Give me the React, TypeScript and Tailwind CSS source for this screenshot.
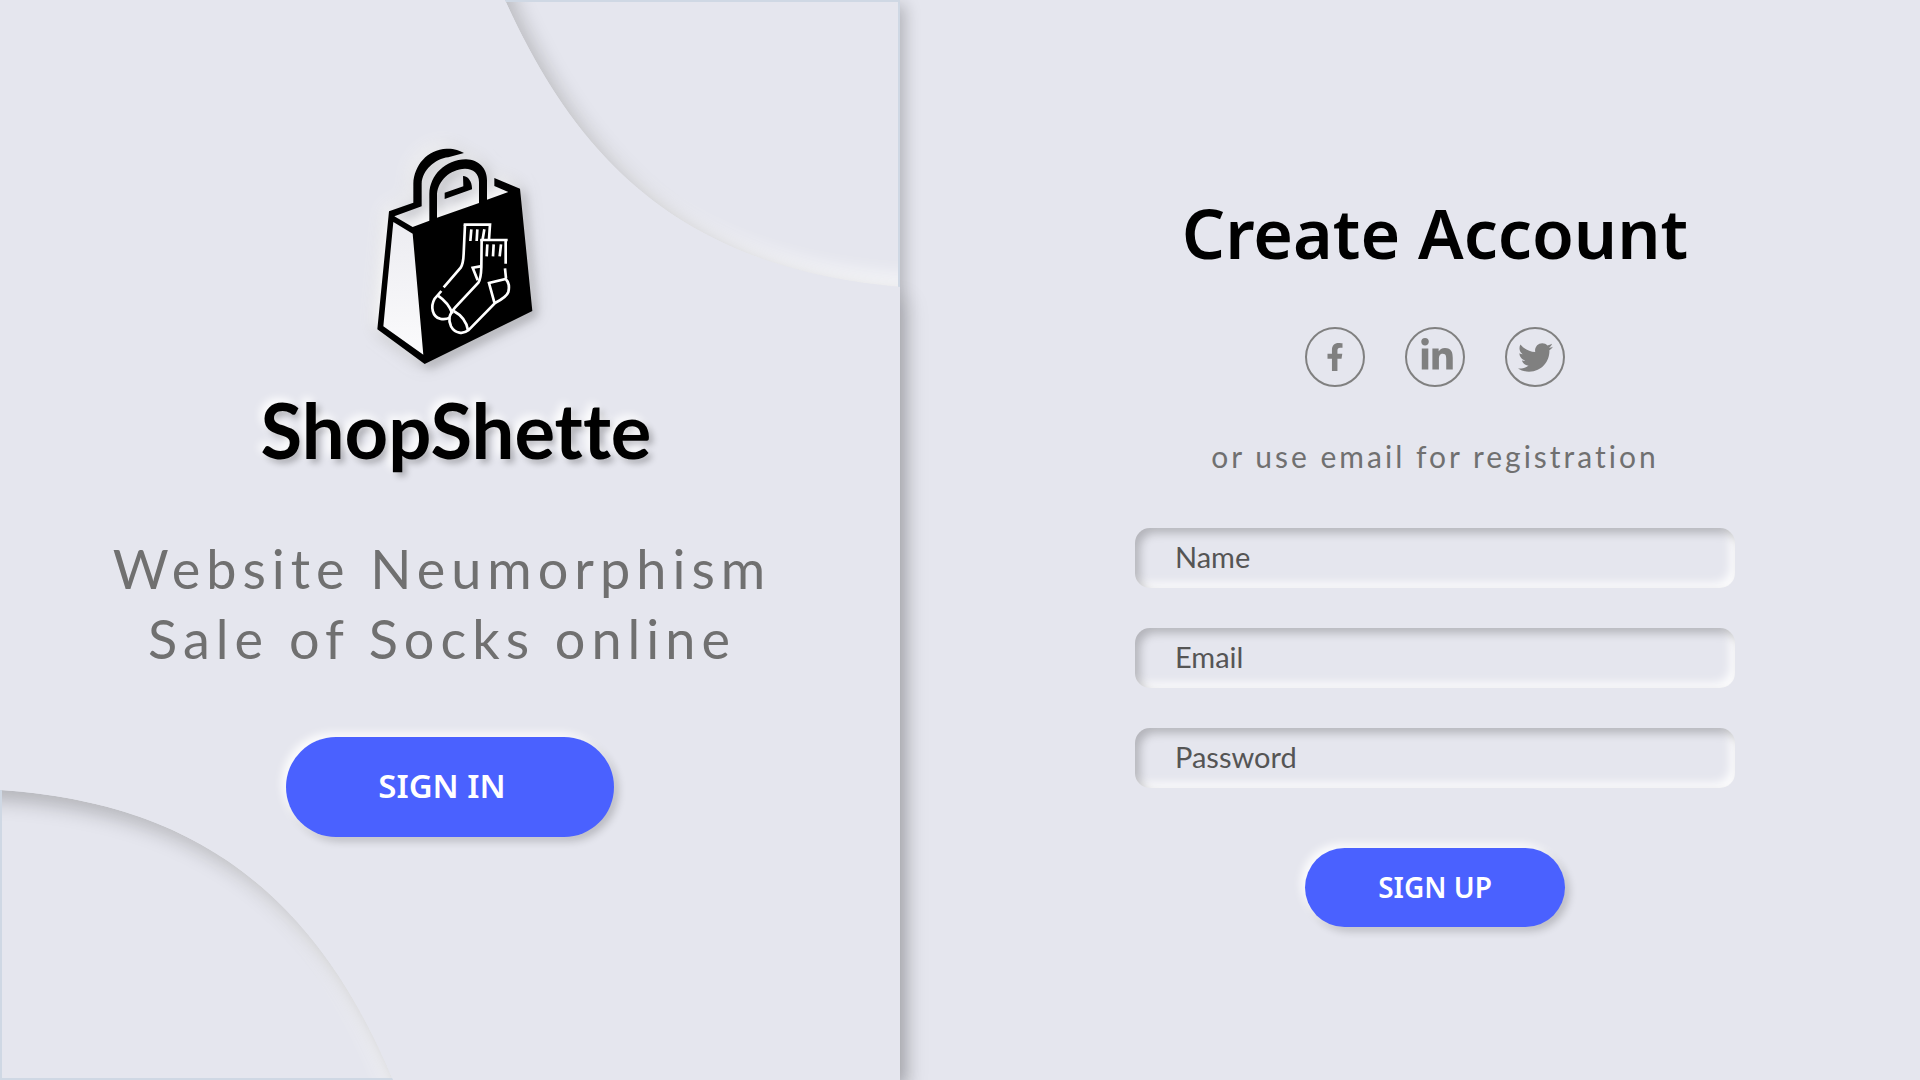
import type { ReactNode } from "react";
import { FaFacebookF, FaLinkedinIn, FaTwitter } from "react-icons/fa";

const raised =
  "shadow-[-4px_-4px_8px_rgba(255,255,255,0.9),4px_4px_8px_rgba(0,0,0,0.2)]";

function BagLogo() {
  return (
    <svg
      viewBox="108 80 480 654"
      className="h-[218px] w-[160px] overflow-visible [filter:drop-shadow(-5px_-5px_8px_rgba(255,255,255,1))_drop-shadow(5px_5px_5px_rgba(0,0,0,0.25))]"
      role="img"
      aria-label="ShopShette shopping bag"
    >
      <defs>
        <linearGradient id="side" x1="0" y1="0" x2="0" y2="1">
          <stop offset="0" stopColor="#ececf1" />
          <stop offset="1" stopColor="#fbfbfc" />
        </linearGradient>
      </defs>
      <path d="M160 305 L218 340 L250 703 L130 618Z" fill="url(#side)" />
      <path
        fillRule="evenodd"
        d="M147 273 L220 247 L220 190 C222 135 262 87 320 85 C340 84 360 90 372 98 L325 111 C285 115 247 150 245 190 L245 258 L163 288 L218 320 L268 301 V220 C270 165 315 118 378 117 C417 118 441 145 441 180 V238 L505 215 L463 197 V173 L540 205 L577 572 L254 731 L112 627Z M160 305 L130 618 L250 703 L218 340Z M291 292 V220 C295 182 328 147 375 145 C400 145 417 160 417 185 V248Z M369 167 C385 167 397 185 396 207 L314 236 V217 L370 198Z"
      />
      <g fill="none" stroke="#fff" strokeWidth="8">
        <path d="M371 313 H450 L447 357" />
        <path d="M375 313 L371 400 Q370 430 362 442 L311 501" />
        <path d="M394 327 L391 362 M412 327 L410 362 M433 327 L428 357" />
        <path d="M304 512 L284 535 C270 560 278 590 300 595 Q315 599 330 592" />
        <path d="M293 525 C315 540 330 558 337 580" />
        <path d="M421 438 L398 442 L413 480" />
        <path d="M421 359 H503 M497 360 V430 M495 444 L498 474" />
        <path d="M425 357 L424 440 Q423 475 415 487 L345 562 C325 585 325 600 333 618 C345 640 370 642 385 630 L465 548 Q500 530 505 515 Q511 490 497 476 L447 488 L463 546" />
        <path d="M341 572 C365 585 380 605 384 630" />
        <path d="M442 372 L440 408 M461 372 L459 408 M483 372 L479 408" />
      </g>
    </svg>
  );
}

function InsetFilter({ id }: { id: string }) {
  return (
    <filter id={id} x="-10%" y="-10%" width="120%" height="120%" colorInterpolationFilters="sRGB">
      <feOffset in="SourceAlpha" dx="10" dy="10" result="o1" />
      <feGaussianBlur in="o1" stdDeviation="10" result="b1" />
      <feComposite in="SourceAlpha" in2="b1" operator="out" result="s1" />
      <feFlood floodColor="#000" floodOpacity="0.24" />
      <feComposite in2="s1" operator="in" result="dark" />
      <feOffset in="SourceAlpha" dx="-10" dy="-10" result="o2" />
      <feGaussianBlur in="o2" stdDeviation="10" result="b2" />
      <feComposite in="SourceAlpha" in2="b2" operator="out" result="s2" />
      <feFlood floodColor="#fff" floodOpacity="0.85" />
      <feComposite in2="s2" operator="in" result="light" />
      <feMerge>
        <feMergeNode in="SourceGraphic" />
        <feMergeNode in="light" />
        <feMergeNode in="dark" />
      </feMerge>
    </filter>
  );
}

function TopCorner() {
  return (
    <svg
      className="absolute top-0 right-0 h-[288px] w-[395px]"
      viewBox="0 0 395 288"
      aria-hidden="true"
    >
      <defs>
        <InsetFilter id="inset-top" />
        <clipPath id="clip-top">
          <path d="M0 0 C70 155 172 268 395 287 V0Z" />
        </clipPath>
      </defs>
      <g clipPath="url(#clip-top)">
        <path
          d="M-20 -60 L0 0 C70 155 172 268 395 287 L440 290 V-60Z"
          fill="#e5e6ee"
          filter="url(#inset-top)"
        />
        <path d="M0 1 H394 V288" fill="none" stroke="#cfd8e4" strokeWidth="2" />
      </g>
    </svg>
  );
}

function BottomCorner() {
  return (
    <svg
      className="absolute bottom-0 left-0 h-[290px] w-[394px]"
      viewBox="0 0 394 290"
      aria-hidden="true"
    >
      <defs>
        <InsetFilter id="inset-bottom" />
        <clipPath id="clip-bottom">
          <path d="M0 0 C180 12 310 90 393 290 H0Z" />
        </clipPath>
      </defs>
      <g clipPath="url(#clip-bottom)">
        <path
          d="M-40 -3 L0 0 C180 12 310 90 393 290 L418 350 H-40Z"
          fill="#e5e6ee"
          filter="url(#inset-bottom)"
        />
        <path d="M1 0 V289 H394" fill="none" stroke="#cfd8e4" strokeWidth="2" />
      </g>
    </svg>
  );
}

function SocialButton({ label, children }: { label: string; children: ReactNode }) {
  return (
    <a
      href="#"
      aria-label={label}
      className="flex size-[60px] items-center justify-center rounded-full border-2 border-[#808080] text-[#808080]"
    >
      {children}
    </a>
  );
}

function Field({ id, label, type }: { id: string; label: string; type: string }) {
  return (
    <input
      id={id}
      type={type}
      aria-label={label}
      placeholder={label}
      className="block h-[60px] w-full rounded-[15px] bg-[#e5e6ee] px-10 pb-1 font-['Lato',sans-serif] text-[29px] text-[#555] outline-none placeholder:text-[#555] placeholder:opacity-100 shadow-[inset_5px_5px_10px_rgba(0,0,0,0.22),inset_-5px_-5px_10px_rgba(255,255,255,0.9)]"
    />
  );
}

export default function App() {
  return (
    <div className="grid min-h-screen grid-cols-[15fr_17fr] overflow-hidden bg-[#e5e6ee]">
      <section className="relative isolate flex flex-col items-center pt-[147px]">
        <div
          aria-hidden="true"
          className="absolute inset-x-0 top-[288px] bottom-0 -z-10 shadow-[10px_10px_20px_rgba(0,0,0,0.1)]"
        />
        <div
          aria-hidden="true"
          className="absolute inset-0 -z-10 bg-[#e5e6ee] shadow-[5px_5px_15px_rgba(0,0,0,0.22)]"
        />
        <TopCorner />
        <BottomCorner />
        <div className="relative flex flex-col items-center pl-3">
          <BagLogo />
          <h1 className="mt-4 font-['Lato',sans-serif] text-[76px] leading-[98px] font-bold text-black [font-variant-ligatures:none] [text-shadow:-4px_-4px_8px_#fff,4px_4px_6px_rgba(0,0,0,0.25)]">
            ShopShette
          </h1>
        </div>
        <p className="relative mt-[55px] pr-4 text-center font-['Lato',sans-serif] text-[54px] leading-[70px] tracking-[6px] text-[#707070]">
          Website Neumorphism
          <br />
          Sale of Socks online
        </p>
        <button
          type="button"
          className={`relative mt-[63px] h-[100px] w-[328px] rounded-full bg-[#4a61ff] pr-4 pb-0.5 font-['Noto_Sans',sans-serif] text-[33px] font-semibold text-white ${raised}`}
        >
          SIGN IN
        </button>
      </section>

      <main className="flex flex-col items-center pt-[184px] pr-10 pl-[90px]">
        <h2 className="text-center font-['Noto_Sans',sans-serif] text-[68px] leading-[98px] font-semibold text-black">
          Create Account
        </h2>
        <nav aria-label="Social sign up" className="mt-[45px] flex gap-10">
          <SocialButton label="Facebook">
            <FaFacebookF size={28} />
          </SocialButton>
          <SocialButton label="LinkedIn">
            <FaLinkedinIn size={36} className="mb-0.5 ml-1" />
          </SocialButton>
          <SocialButton label="Twitter">
            <FaTwitter size={35} />
          </SocialButton>
        </nav>
        <p className="mt-[49px] text-center font-['Lato',sans-serif] text-[30px] leading-10 tracking-[3px] text-[#707070]">
          or use email for registration
        </p>
        <form
          className="mt-[52px] flex w-full max-w-[600px] flex-col gap-10"
          onSubmit={(e) => e.preventDefault()}
        >
          <Field id="name" label="Name" type="text" />
          <Field id="email" label="Email" type="email" />
          <Field id="password" label="Password" type="password" />
          <button
            type="submit"
            className={`mt-5 h-[79px] w-[260px] self-center rounded-full bg-[#4a61ff] pb-0.5 font-['Noto_Sans',sans-serif] text-[28px] font-semibold text-white ${raised}`}
          >
            SIGN UP
          </button>
        </form>
      </main>
    </div>
  );
}
